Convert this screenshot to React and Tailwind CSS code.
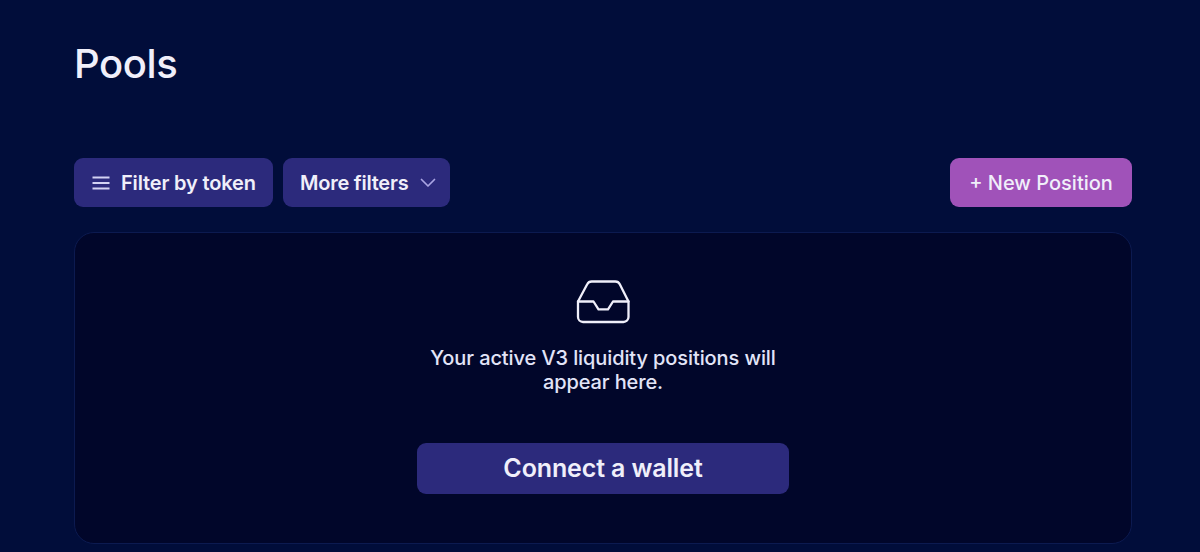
import React from 'react';

function MenuIcon() {
  return (
    <svg width="18" height="14" viewBox="0 0 18 14" fill="none" stroke="#d3d2f3" strokeWidth="1.8">
      <path d="M0.5 1.500h17M0.5 7h17M0.5 12.500h17" />
    </svg>
  );
}

function ChevronIcon() {
  return (
    <svg width="16" height="10" viewBox="0 0 16 10" fill="none" stroke="#aaa5e3" strokeWidth="1.7" strokeLinecap="round" strokeLinejoin="round">
      <path d="M1.500 1.500L8 8l6.500-6.500" />
    </svg>
  );
}

function InboxIcon() {
  return (
    <svg width="54" height="44" viewBox="0 0 54 44" fill="none" stroke="currentColor" strokeWidth="2.3" strokeLinecap="round" strokeLinejoin="round">
      <path d="M52.500 21.500H37l-5 7.800h-9.500l-5-7.800H2" />
      <path d="M11.200 4.300L2 21.500V37a5 5 0 0 0 5 5h40.500a5 5 0 0 0 5-5V21.500L43.800 4.300A5 5 0 0 0 39.300 1.500H15.700a5 5 0 0 0-4.500 2.800z" />
    </svg>
  );
}

function App() {
  return (
    <div className="h-[552px] overflow-hidden bg-[#010d3a] pl-[74px] pr-[68px] pt-10 font-['Inter',sans-serif] font-medium text-[#f0effa]">
      <h1 className="h-12 text-[40px] leading-[48px] tracking-[-0.4px]">Pools</h1>

      {/* Toolbar */}
      <div className="mt-[70px] flex h-[49px] items-stretch justify-between text-xl">
        <div className="flex gap-[10px] font-semibold tracking-[-0.16px]">
          <button className="flex w-[199px] items-center gap-[11px] rounded-[9px] bg-[#2c2a7c] pl-[18px]">
            <MenuIcon />
            Filter by token
          </button>
          <button className="flex w-[167px] items-center gap-3 rounded-[9px] bg-[#2c2a7c] pl-[17px]">
            <span className="w-[108px] whitespace-nowrap text-left tracking-[-0.24px]">More filters</span>
            <ChevronIcon />
          </button>
        </div>
        <button className="w-[182px] rounded-[9px] bg-[#a052b9]">+ New Position</button>
      </div>

      {/* Empty state */}
      <section className="mt-[25px] flex h-[312px] flex-col items-center rounded-[20px] border border-[#0c1a50] bg-[#01062a] pt-[47px]">
        <InboxIcon />
        <p className="mt-[22px] w-[372px] text-center text-xl leading-6 tracking-[-0.1px] text-[#e2e4f8]">
          Your active V3 liquidity positions will appear here.
        </p>
        <button className="mt-[49px] h-[51px] w-[372px] rounded-[9px] bg-[#2c2a7c] pt-px text-[25px] font-semibold tracking-[-0.13px]">
          Connect a wallet
        </button>
      </section>
    </div>
  );
}

export default App;
